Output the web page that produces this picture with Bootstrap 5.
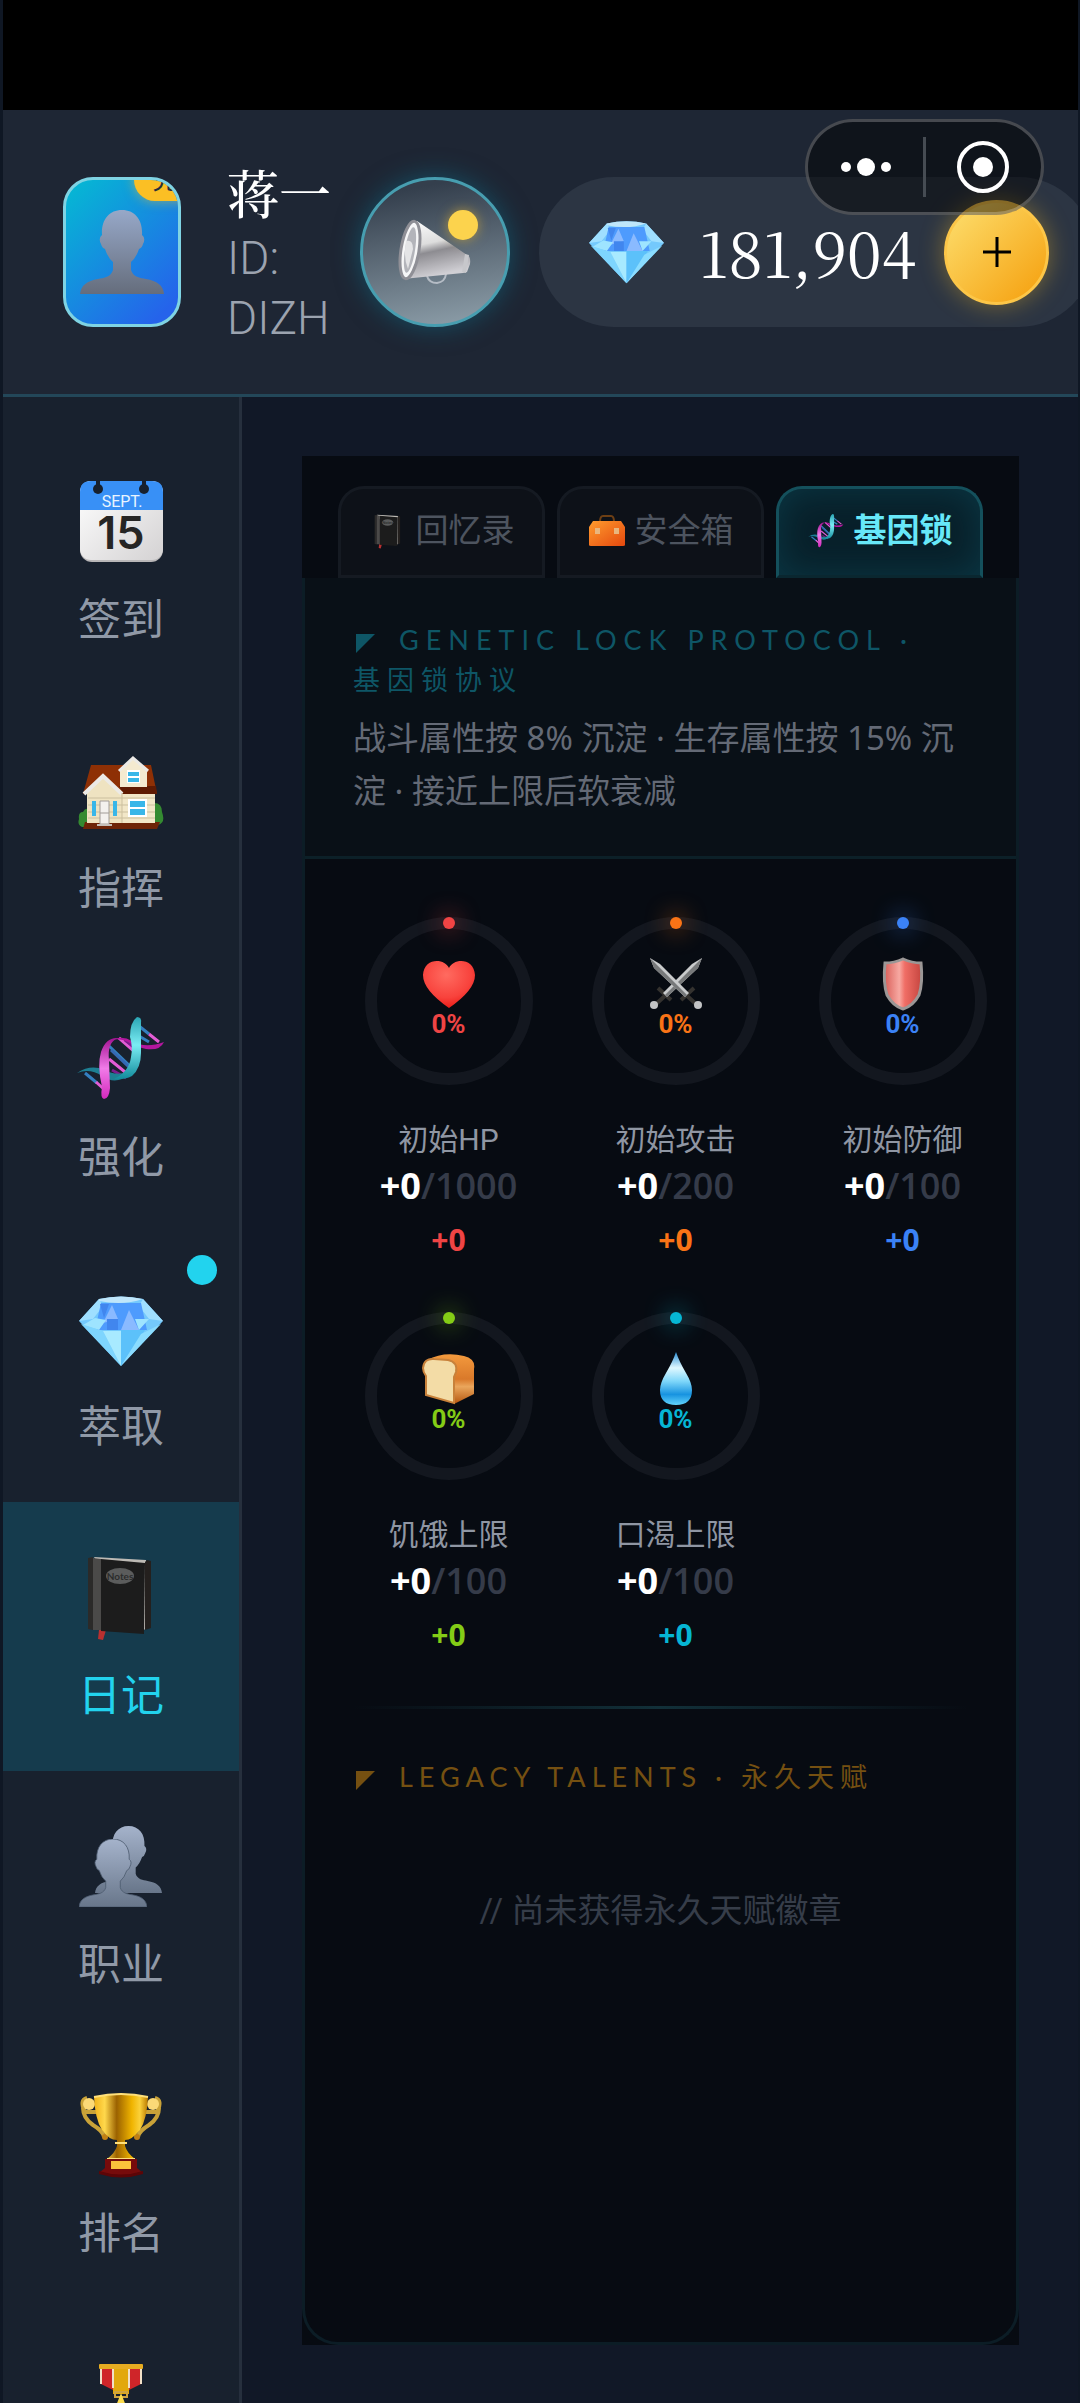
<!DOCTYPE html>
<html lang="zh-CN">
<head>
<meta charset="utf-8">
<meta name="viewport" content="width=device-width, initial-scale=1">
<title>基因锁</title>
<link href="https://cdn.jsdelivr.net/npm/bootstrap@5.3.0/dist/css/bootstrap.min.css" rel="stylesheet">
<style>
:root{--ui:"Roboto","Noto Sans CJK SC",sans-serif;--num:"Open Sans","Noto Sans CJK SC",sans-serif;--wide:"Lato","Noto Sans CJK SC",sans-serif;--serif:"Noto Serif CJK SC","Liberation Serif",serif}
body{background:#111827;font-family:var(--ui);color:#9ca3af}
.app{height:100vh;overflow:hidden;border:solid #0f1724;border-width:0 2px 0 3px}
.status{height:110px;background:#000;margin:0 -2px 0 -3px}
.topbar{height:287px;background:#1e2634;border-bottom:3px solid #234759;padding-left:60px;gap:29px}
.avatar{width:118px;height:150px;border:3px solid #7fd3e3;border-radius:30px;background:linear-gradient(135deg,#06b6d4 5%,#2563eb 90%)}
.avatar svg{width:84px;height:84px}
.tag{top:-21px;left:68px;width:70px;height:42px;padding-left:18px;border-radius:21px;background:#fbbf24;color:#26303c;font-size:27px;line-height:42px;box-shadow:0 0 12px #fbbf2488}
.who{width:104px;margin-left:17px}
.who .nick{font:500 52px/72px var(--serif);color:#fff}
.who .uid{font-size:46px;line-height:60px;font-weight:300;color:#9ca3af}
.horn{width:150px;height:150px;border:3px solid #479eb0;background:linear-gradient(170deg,#343f4d 10%,#8a9ba6 95%);box-shadow:0 0 26px #0e748f88}
.horn svg{width:76px;height:66px}
.horn i{top:30px;right:29px;width:30px;height:30px;background:#fcd34d;box-shadow:0 0 12px #fbbf2488}
.purse{height:150px;padding:0 45px 0 50px;background:#2c3543}
.purse svg{width:75px;height:66px}
.purse b{min-width:215px;font:62px/1 var(--serif);color:#fff;margin:0 28px 0 35px}
.plus{width:105px;height:105px;border:3px solid #fcc648;background:linear-gradient(135deg,#fde070,#f59e0b);box-shadow:0 0 24px #fbbf2466;color:#000}
.purse .plus svg{width:28px;height:30px}
.capsule{top:119px;right:34px;width:239px;height:96px;gap:28px;border:3px solid #ffffff3a;background:#00000078}
.capsule .btn svg{width:58px;height:58px}
.capsule .sep{width:3px;height:60px;background:#464c53}
.side{width:239px;padding-top:29px;background:#18212e;border-right:3px solid #262f3d}
.side a{height:269px;padding-top:48px;color:#9099a7;text-decoration:none}
.side a>svg{width:88px;height:94px}
.side a span{margin-top:20px;font-size:43px;line-height:65px}
.side a.on{background:#153b4d;color:#22d3ee}
.side i{top:22px;right:22px;width:30px;height:30px;background:#22d3ee}
.main{padding:59px 59px 58px 60px}
.panel{background:#070b12}
.tabs{padding:30px 36px 0;gap:12px}
.tabs button{height:92px;flex:1 1 0;padding:0 0 2px;gap:9px;font-size:33px;color:#4d545f;background:#0d1118;border:3px solid #151a22;border-radius:26px 26px 0 0;white-space:nowrap}
.tabs button svg{width:38px;height:38px}
.tabs button.on{color:#67e8f9;font-weight:700;border-color:#14505c;border-bottom-color:#0a2730;background:#08202a;box-shadow:inset 0 0 36px #0c4352aa}
.sheet{border:3px solid #0c1d26;border-top:0;border-radius:0 0 36px 36px}
.intro{padding:42px 48px 39px;background:#091017;border-bottom:3px solid #0c2028}
.cap1{font:27px/40px var(--wide);color:#0e5666;letter-spacing:7px}
.cap2{font:27px/40px var(--wide);color:#755011;letter-spacing:6px}
.tri{width:19px;height:19px;margin:0 24px 0 3px}
.desc{margin-top:11px;font-family:"Noto Sans","Noto Sans CJK SC",sans-serif;font-size:33px;line-height:53px;color:#646a76}
.stats{padding:58px 6px 0 36px;gap:25px 12px;display:grid;grid-template-columns:repeat(3,1fr)}
.stat{height:370px}
.ring{width:168px;height:168px;border:12px solid #13171f;color:var(--c)}
.ring i{top:-12px;left:66px;width:12px;height:12px;background:var(--c);box-shadow:0 0 24px var(--c)}
.ring svg{width:54px;height:54px;margin-top:28px}
.ring b{font:700 26px/26px var(--ui)}
.stat .nm{margin-top:33px;font-size:30px;line-height:44px;color:#8f96a3}
.stat .val{font:600 36px/48px var(--num);color:#353b49}
.stat .val b{color:#fff;font-weight:700}
.stat .add{font:700 30px/44px var(--num);color:var(--c);margin-top:8px}
.rule{height:3px;margin:24px 48px 0;background:linear-gradient(90deg,transparent,#123039,transparent)}
.none{margin-top:87px;font-size:33px;line-height:53px;color:#363d49}
</style>
</head>
<body>
<svg width="0" height="0" class="position-absolute" aria-hidden="true">
<defs>
<linearGradient id="gP" x1="0" y1="0" x2="0" y2="1"><stop offset="0" stop-color="#a5b3cb"/><stop offset="1" stop-color="#68768a"/></linearGradient>
<linearGradient id="gAv" x1="0" y1="0" x2="0" y2="1"><stop offset="0" stop-color="#97a8c8"/><stop offset="1" stop-color="#656d7c"/></linearGradient>
<linearGradient id="gH" x1="0" y1="0" x2=".25" y2="1"><stop offset="0" stop-color="#fff"/><stop offset=".45" stop-color="#ddd"/><stop offset=".6" stop-color="#8d8c91"/><stop offset="1" stop-color="#d0cfd4"/></linearGradient>
<linearGradient id="gG"><stop offset="0" stop-color="#f1b31b"/><stop offset=".2" stop-color="#ffd84c"/><stop offset=".42" stop-color="#9b6200"/><stop offset=".7" stop-color="#f0b400"/><stop offset=".85" stop-color="#fbd13a"/><stop offset="1" stop-color="#b97900"/></linearGradient>
<linearGradient id="gM" x1="0" y1="0" x2="0" y2="1"><stop offset="0" stop-color="#a31393"/><stop offset=".5" stop-color="#f17be8"/><stop offset="1" stop-color="#d329bd"/></linearGradient>
<linearGradient id="gC" x1="0" y1="0" x2="0" y2="1"><stop offset="0" stop-color="#2aa5b4"/><stop offset=".45" stop-color="#7bedf4"/><stop offset="1" stop-color="#128b9c"/></linearGradient>
<linearGradient id="gW" x1="0" y1="0" x2="1" y2="1"><stop offset="0" stop-color="#fff"/><stop offset="1" stop-color="#d4d2d3"/></linearGradient>
<radialGradient id="gHe" cx=".45" cy=".3" r=".8"><stop offset="0" stop-color="#ff6b60"/><stop offset=".6" stop-color="#f8423c"/><stop offset="1" stop-color="#e60d08"/></radialGradient>
<linearGradient id="gSh"><stop offset="0" stop-color="#d95e58"/><stop offset=".4" stop-color="#f7a9a2"/><stop offset=".55" stop-color="#f06e66"/><stop offset="1" stop-color="#c5453f"/></linearGradient>
<linearGradient id="gDr" x1="0" y1="0" x2="0" y2="1"><stop offset="0" stop-color="#2b8fd6"/><stop offset=".3" stop-color="#dff8ff"/><stop offset=".55" stop-color="#7fd7fa"/><stop offset=".8" stop-color="#1793e0"/><stop offset="1" stop-color="#62d3fb"/></linearGradient>
<linearGradient id="gBr" x1="0" y1="0" x2="0" y2="1"><stop offset="0" stop-color="#f39a3e"/><stop offset=".5" stop-color="#d9792a"/><stop offset=".65" stop-color="#eaa65c"/><stop offset="1" stop-color="#b4560f"/></linearGradient>
<linearGradient id="gBa" x1="0" y1="0" x2="1" y2="1"><stop offset="0" stop-color="#ff9c2e"/><stop offset="1" stop-color="#e4480e"/></linearGradient>
</defs>
<symbol id="person" viewBox="0 0 84 84"><path d="M42 0C29 0 21 10 22 25q-4 3-1 9 1 4 4 5 3 9 8 13v8c-2 7-9 8-15 9C7 71 1 75 0 84h84c-1-9-7-13-18-15-6-1-13-2-15-9v-8q5-4 8-13 3-1 4-5 3-6-1-9C63 10 55 0 42 0z"/></symbol>
<symbol id="diamond" viewBox="0 0 84 70"><path fill="#74c9fc" d="M20 3Q42-2 64 3L84 25 42 70 0 25z"/><path fill="#9fdfff" d="M20 3L0 25l14-2 10-13zM64 3l20 22-14-2-10-13z"/><path fill="#4e9bfd" d="M22 7h40l6 27H16z"/><path fill="#8abaff" d="M33 9l6 14-15 4zM50 14l10 20H42z"/><path fill="#4186ee" d="M28 23h11v11H28zM21 8h9l-5 14z"/><path fill="#9ee4ff" d="M56 23l14 0-10 11zM16 22l11 2-7 10-16-5z"/><path fill="#7ed5fe" d="M2 28l22 7 18 35z"/><path fill="#a8eaff" d="M24 35h18v35z"/><path fill="#5cc1fa" d="M42 34h24L42 70z"/><path fill="#8adcff" d="M82 28L62 38 42 70z"/><path fill="#bfe6fa" d="M20 3Q42-2 64 3q-20 7-44 2z"/></symbol>
<symbol id="calendar" viewBox="0 0 88 94"><rect x="3" y="7" width="83" height="81" rx="12" fill="#b9b7b8"/><rect x="3" y="7" width="83" height="79" rx="11" fill="url(#gW)"/><path d="M3 36V18Q3 7 14 7h61q11 0 11 11v18z" fill="#3890f6"/><g fill="#17202d"><circle cx="21" cy="15" r="5"/><circle cx="67" cy="15" r="5"/><path d="M19 6h4v8h-4zM65 6h4v8h-4z"/></g><text x="45" y="33" text-anchor="middle" font-family="Roboto" font-size="16" fill="#e9f4ff">SEPT.</text><text x="44" y="75" text-anchor="middle" font-family="Inter" font-size="45" font-weight="600" fill="#262524">15</text></symbol>
<symbol id="house" viewBox="0 0 88 94"><path fill="#348a31" d="M2 76q-1-7 4-7 3-6 8-1v16H5q-5-2-3-8zM77 60q8 0 8 9 4 11-4 13h-7z"/><path fill="#6e2408" d="M8 79h75l-3 7H6z"/><path fill="#f2e7c8" d="M10 49h68v31H10z"/><path fill="#8e3005" d="M14 22h60l6 29H6z"/><path fill="#5f1b03" d="M42 43h37l1 8H46z"/><path fill="#f4ead0" d="M43 26L56 15l14 12v17H43z"/><path fill="none" stroke="#eceae6" stroke-width="3" d="M42 28l14-13 15 13"/><path fill="#efe3c1" d="M10 49l16-17 19 17v31H10z"/><path fill="none" stroke="#eceae6" stroke-width="4" d="M7 51l19-18 19 18"/><path stroke="#cbbf9e" d="M11 55h67M11 62h67M11 69h67M11 75h67M45 50v30"/><path fill="#fff" d="M51 56h19v18H51zM50 27h13v13H50z"/><path fill="#38b6e8" d="M53 58h15v6H53zM53 66h15v6H53zM51 29h11v4H51zM51 35h11v4H51zM15 58h4v15h-4zM36 58h4v15h-4z"/><path fill="#f4f1ee" stroke="#a29c98" d="M23 58h9v23h-9z"/><path stroke="#a29c98" d="M23 70h9"/><path fill="#c5bfba" d="M20 81h15v2H20z"/></symbol>
<symbol id="dna" viewBox="0 0 88 94"><g stroke-width="3"><path stroke="#347fc0" d="M62 14l10 8M62 24l10 6M32 34l23 22M8 61l12 10"/><path stroke="#e35cd5" d="M72 22l10 8M42 26l16 14M32 47l21 17M19 70l10 9"/><path stroke="#7a1c8d" d="M48 28l10 8M35 58l14 8"/><path stroke="#3568b4" d="M34 38l20 19"/></g><path fill="#1d7f93" d="M0 61q14-9 27-3 14 7 26 1l-8 8q-10 4-20-3Q13 56 0 61z"/><path fill="#b3179f" d="M35 28q10-5 20 1 13 8 32 1-4 9-18 7-10-2-18-7-8-4-16-2z"/><path fill="url(#gC)" d="M60 5q5 0 4 6v30q0 15-9 23-8 4-18 3 15-7 17-22 2-10-1-20 0-15 7-20z"/><path fill="url(#gM)" d="M41 26q-11 4-9 22l1 28q-1 11-6 11-4-1-2-12-5-22-1-35 5-15 17-14z"/></symbol>
<symbol id="notebook" viewBox="0 0 88 94"><path fill="#b83030" d="M22 80h7l-3 10-5-1z"/><path fill="#2b2a29" d="M11 8l5-1v73l-5-1z"/><path fill="#bdbab5" d="M17 7l52 3v69l-8 3z"/><path fill="#24201e" d="M70 10l4 1v67l-6 2V12z"/><path fill="#4b4a49" d="M16 8l8 1v71h-8z"/><path fill="#1c1c1c" d="M24 9l44 4-1 71-43-3z"/><ellipse cx="43" cy="26" rx="14" ry="8" fill="#5b5c5c"/><text x="43" y="30" text-anchor="middle" font-family="Lato" font-size="10" font-weight="700" fill="#2b2c2c">Notes</text></symbol>
<symbol id="people" viewBox="0 0 88 94"><g fill="url(#gP)"><use href="#person" x="18" y="7" width="67" height="67"/><use href="#person" x="2" y="20" width="68" height="68" stroke="#4c5a6e" stroke-width="1"/></g></symbol>
<symbol id="trophy" viewBox="0 0 88 94"><path fill="none" stroke="#c9a238" stroke-width="4" d="M19 24H8q-6-12 2-14M6 20q0 10 10 17 10 6 11 12M69 24h11q6-12-2-14M82 20q0 10-10 17-10 6-11 12"/><circle cx="12" cy="16" r="6" fill="#fbd977"/><circle cx="76" cy="16" r="6" fill="#fbd977"/><circle cx="28" cy="49" r="3" fill="#c07f15"/><circle cx="60" cy="49" r="3" fill="#c07f15"/><path fill="url(#gG)" d="M17 9q27-7 54 0-1 22-8 33-8 10-15 10v6q2 7 10 13H30q8-6 10-13v-6q-8 0-15-10-7-11-8-33z"/><path fill="none" stroke="#ffe07b" stroke-width="2" d="M17 9q27-6 54 0M38 55h12M30 71h28"/><path fill="#760b0b" d="M28 71h32v9l6 5q-22 8-44 0l6-5z"/><path fill="#5b0507" d="M22 83q22 7 44 0v3q-22 7-44 0z"/><path fill="#fac33b" d="M34 73h20v8H34z"/></symbol>
<symbol id="medal" viewBox="0 0 88 94"><path fill="#cf2529" d="M24 9h40v18L44 37 24 27z"/><path fill="#e2a80d" d="M36 9h16v28H36z"/><path fill="none" stroke="#f1dfc7" stroke-width="2" d="M24 9v18M36 9v22M52 9v22M64 9v18"/><rect x="22" y="7" width="44" height="5" rx="1" fill="#e6ac21"/><path fill="none" stroke="#cfa441" stroke-width="2" d="M38 35h12v5H38z"/><path fill="#fbdb4c" d="M44 36l7 18 20 2-15 12 5 19-17-11-17 11 5-19L17 56l20-2z"/></symbol>
<symbol id="bag" viewBox="0 0 38 38"><path fill="none" stroke="#6d3f14" stroke-width="2" d="M12 10q0-6 3-6h8q3 0 3 6"/><path fill="url(#gBa)" d="M5 9h28l4 6v18q0 1-2 1H3q-2 0-2-1V15z"/><path fill="#e9b67e" d="M7 16h5v6H7zM26 16h5v6h-5z"/></symbol>
<symbol id="tri" viewBox="0 0 19 19"><path fill="currentColor" d="M0 0h19L0 19z"/></symbol>
</svg>

<div class="app d-flex flex-column position-relative">
<div class="status flex-shrink-0"></div>
<header class="topbar d-flex align-items-center flex-shrink-0 overflow-hidden">
<div class="avatar position-relative overflow-hidden d-flex align-items-center justify-content-center flex-shrink-0"><svg fill="url(#gAv)" aria-hidden="true"><use href="#person"/></svg><span class="tag position-absolute">兑</span></div>
<div class="who flex-shrink-0"><div class="nick text-nowrap">蒋一</div><div class="uid">ID: DIZH</div></div>
<button type="button" class="horn btn rounded-circle p-0 position-relative d-flex align-items-center justify-content-center flex-shrink-0" aria-label="公告"><svg viewBox="0 0 76 66" aria-hidden="true"><path fill="none" stroke="#b5bcc5" stroke-width="2" d="M30 57q2 7 10 7 8-1 9-9"/><path fill="url(#gH)" d="M20 2L70 36q4 1 3 9l-3 8-4 1L6 60z"/><path fill="#c7c7cb" d="M68 35l4 1-3 18-4-1z"/><ellipse cx="13" cy="31" rx="9" ry="29" transform="rotate(9 13 31)" fill="#f6f6f7" stroke="#8f8f96" stroke-width="3"/><ellipse cx="13" cy="31" rx="5" ry="23" transform="rotate(9 13 31)" fill="#b3b4ba"/><path fill="#e4e4e6" d="M9 22q7-2 7 8l-5 20q-5-12-2-28z"/></svg><i class="position-absolute rounded-circle"></i></button>
<div class="purse d-flex align-items-center rounded-pill flex-shrink-0"><svg aria-hidden="true"><use href="#diamond"/></svg><b>181,904</b><button type="button" class="plus btn rounded-circle p-0 d-flex align-items-center justify-content-center" aria-label="充值"><svg viewBox="0 0 28 30" stroke="#000" stroke-width="3" aria-hidden="true"><path d="M0 15h28M14 0v30"/></svg></button></div>
</header>

<div class="capsule position-absolute rounded-pill d-flex align-items-center justify-content-center"><button type="button" class="btn p-0 border-0 d-flex" aria-label="更多"><svg viewBox="0 0 58 58" fill="#fff" aria-hidden="true"><circle cx="9" cy="29" r="5"/><circle cx="29" cy="29" r="9"/><circle cx="49" cy="29" r="5"/></svg></button><span class="sep"></span><button type="button" class="btn p-0 border-0 d-flex" aria-label="关闭"><svg viewBox="0 0 58 58" aria-hidden="true"><circle cx="29" cy="29" r="24" fill="none" stroke="#fff" stroke-width="4"/><circle cx="29" cy="29" r="10" fill="#fff"/></svg></button></div>

<div class="d-flex flex-grow-1 overflow-hidden">
<nav class="side d-flex flex-column flex-shrink-0 overflow-hidden">
<a href="#" class="d-flex flex-column align-items-center flex-shrink-0"><svg><use href="#calendar"/></svg><span>签到</span></a>
<a href="#" class="d-flex flex-column align-items-center flex-shrink-0"><svg><use href="#house"/></svg><span>指挥</span></a>
<a href="#" class="d-flex flex-column align-items-center flex-shrink-0"><svg><use href="#dna"/></svg><span>强化</span></a>
<a href="#" class="d-flex flex-column align-items-center flex-shrink-0 position-relative"><svg viewBox="0 0 88 94"><use href="#diamond" x="2" y="15" width="84" height="70"/></svg><span>萃取</span><i class="position-absolute rounded-circle"></i></a>
<a href="#" class="on d-flex flex-column align-items-center flex-shrink-0" aria-current="page"><svg><use href="#notebook"/></svg><span>日记</span></a>
<a href="#" class="d-flex flex-column align-items-center flex-shrink-0"><svg><use href="#people"/></svg><span>职业</span></a>
<a href="#" class="d-flex flex-column align-items-center flex-shrink-0"><svg><use href="#trophy"/></svg><span>排名</span></a>
<a href="#" class="d-flex flex-column align-items-center flex-shrink-0" aria-label="勋章"><svg><use href="#medal"/></svg></a>
</nav>
<main class="main d-flex flex-column flex-grow-1">
<section class="panel d-flex flex-column flex-grow-1">
<div class="tabs d-flex" role="tablist">
<button type="button" role="tab" class="d-flex align-items-center justify-content-center"><svg><use href="#notebook"/></svg>回忆录</button>
<button type="button" role="tab" class="d-flex align-items-center justify-content-center"><svg><use href="#bag"/></svg>安全箱</button>
<button type="button" role="tab" aria-selected="true" class="on d-flex align-items-center justify-content-center"><svg><use href="#dna"/></svg>基因锁</button>
</div>
<div class="sheet flex-grow-1">
<div class="intro"><div class="cap1"><svg class="tri"><use href="#tri"/></svg>GENETIC LOCK PROTOCOL · <span class="text-nowrap">基因锁协议</span></div><div class="desc">战斗属性按 8% 沉淀 · 生存属性按 15% 沉淀 · 接近上限后软衰减</div></div>
<div class="stats">
<div class="stat d-flex flex-column align-items-center" style="--c:#ef4444"><div class="ring rounded-circle position-relative d-flex flex-column align-items-center"><i class="position-absolute rounded-circle"></i><svg viewBox="0 0 54 54"><path fill="url(#gHe)" d="M27 11C23 1 2 0 1 18q0 15 26 33 26-18 26-33C52 0 31 1 27 11z"/></svg><b>0%</b></div><div class="nm">初始HP</div><div class="val"><b>+0</b>/1000</div><div class="add">+0</div></div>
<div class="stat d-flex flex-column align-items-center" style="--c:#f97316"><div class="ring rounded-circle position-relative d-flex flex-column align-items-center"><i class="position-absolute rounded-circle"></i><svg viewBox="0 0 54 54"><g id="sw"><path stroke="#34322f" stroke-width="4" d="M18 37L6 48M9 31l13 12"/><path fill="#c9cbcc" d="M53 1l-4 10-31 29-4-4L43 7z"/><path fill="#77797a" d="M53 1L16 38l2 2 31-29z"/><circle cx="5" cy="48" r="4" fill="#c3c4c5"/></g><use href="#sw" transform="matrix(-1 0 0 1 54 0)"/></svg><b>0%</b></div><div class="nm">初始攻击</div><div class="val"><b>+0</b>/200</div><div class="add">+0</div></div>
<div class="stat d-flex flex-column align-items-center" style="--c:#3b82f6"><div class="ring rounded-circle position-relative d-flex flex-column align-items-center"><i class="position-absolute rounded-circle"></i><svg viewBox="0 0 54 54"><path fill="url(#gSh)" stroke="#9b9796" stroke-width="3" d="M27 2q9 4 18 4 2 20-2 32-6 11-16 14-10-3-16-14Q7 26 9 6q9 0 18-4z"/></svg><b>0%</b></div><div class="nm">初始防御</div><div class="val"><b>+0</b>/100</div><div class="add">+0</div></div>
<div class="stat d-flex flex-column align-items-center" style="--c:#84cc16"><div class="ring rounded-circle position-relative d-flex flex-column align-items-center"><i class="position-absolute rounded-circle"></i><svg viewBox="0 0 54 54"><path fill="url(#gBr)" d="M5 8Q22-1 42 4q12 3 10 13v25L32 52 18 30z"/><path fill="#f3dca6" stroke="#c8813a" stroke-width="2" d="M1 16Q2 6 12 7l14 1q10 2 8 12l-2 5v26L4 43V24q-3-4-3-8z"/></svg><b>0%</b></div><div class="nm">饥饿上限</div><div class="val"><b>+0</b>/100</div><div class="add">+0</div></div>
<div class="stat d-flex flex-column align-items-center" style="--c:#06b6d4"><div class="ring rounded-circle position-relative d-flex flex-column align-items-center"><i class="position-absolute rounded-circle"></i><svg viewBox="0 0 54 54"><path fill="url(#gDr)" d="M27 0q3 9 10 21 6 10 6 17 0 15-16 15T11 38q0-7 6-17Q24 9 27 0z"/></svg><b>0%</b></div><div class="nm">口渴上限</div><div class="val"><b>+0</b>/100</div><div class="add">+0</div></div>
</div>
<div class="rule"></div>
<div class="px-5 pt-5"><div class="cap2 text-nowrap"><svg class="tri"><use href="#tri"/></svg>LEGACY TALENTS · 永久天赋</div></div>
<div class="none text-center">// 尚未获得永久天赋徽章</div>
</div>
</section>
</main>
</div>
</div>
<script src="https://cdn.jsdelivr.net/npm/bootstrap@5.3.0/dist/js/bootstrap.bundle.min.js"></script>
</body>
</html>
